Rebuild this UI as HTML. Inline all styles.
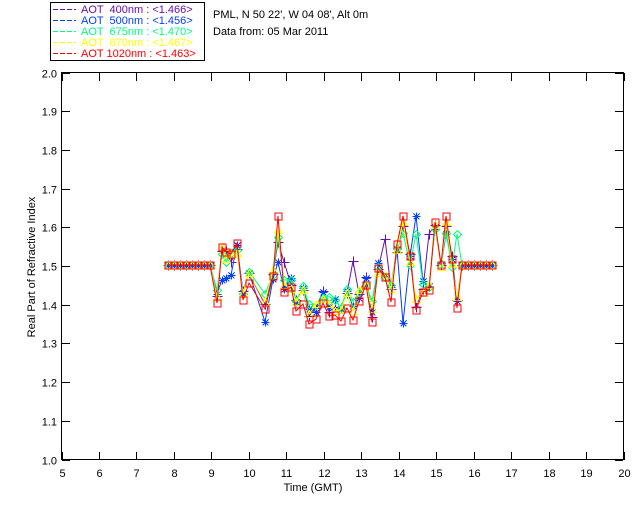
<!DOCTYPE html>
<html><head><meta charset="utf-8"><style>
html,body{margin:0;padding:0;background:#fff;width:640px;height:512px;overflow:hidden}
svg{display:block;font-family:"Liberation Sans",sans-serif;font-size:11px}
</style></head><body>
<svg id="s" width="640" height="512" xmlns="http://www.w3.org/2000/svg" shape-rendering="crispEdges">
<rect x="50.5" y="2.5" width="154" height="58" fill="none" stroke="#000"/>
<g stroke-width="1" stroke-dasharray="5,2">
<line x1="53" y1="9.5" x2="76" y2="9.5" stroke="#6a0dad"/>
<line x1="53" y1="20.5" x2="76" y2="20.5" stroke="#0040ff"/>
<line x1="53" y1="31.5" x2="76" y2="31.5" stroke="#00ff80"/>
<line x1="53" y1="42.5" x2="76" y2="42.5" stroke="#ffff00"/>
<line x1="53" y1="53.5" x2="76" y2="53.5" stroke="#ff0000"/>
</g>
<text x="81" y="13" fill="#6a0dad" xml:space="preserve">AOT  400nm : &lt;1.466&gt;</text>
<text x="81" y="24" fill="#0040ff" xml:space="preserve">AOT  500nm : &lt;1.456&gt;</text>
<text x="81" y="35" fill="#00ff80" xml:space="preserve">AOT  675nm : &lt;1.470&gt;</text>
<text x="81" y="46" fill="#ffff00" xml:space="preserve">AOT  870nm : &lt;1.467&gt;</text>
<text x="81" y="57" fill="#ff0000" xml:space="preserve">AOT 1020nm : &lt;1.463&gt;</text>
<text x="213" y="18" fill="#000">PML, N 50 22', W 04 08', Alt 0m</text>
<text x="213" y="35" fill="#000">Data from: 05 Mar 2011</text>
<rect x="61.5" y="72.5" width="562" height="387" fill="none" stroke="#000"/>
<g id="ax"></g>
<text x="313" y="491" text-anchor="middle">Time (GMT)</text>
<text transform="translate(35,267) rotate(-90)" text-anchor="middle">Real Part of Refractive Index</text>
<g id="d"></g>
</svg>
<script>
var ns="http://www.w3.org/2000/svg",ax=document.getElementById('ax'),d=document.getElementById('d');
function el(t,a,p){var e=document.createElementNS(ns,t);for(var k in a)e.setAttribute(k,a[k]);if(a.txt){e.textContent=a.txt;e.removeAttribute('txt');}(p||ax).appendChild(e);return e;}
for(var i=0;i<=15;i++){var x=Math.round(61.5+i*562/15)+.5;
 el('line',{x1:x,y1:460,x2:x,y2:452,stroke:'#000'});el('line',{x1:x,y1:73,x2:x,y2:81,stroke:'#000'});
 el('text',{x:x,y:477,'text-anchor':'middle',txt:String(5+i)});}
for(var j=0;j<=10;j++){var y=Math.round(459.5-j*38.7)+.5;
 el('line',{x1:62,y1:y,x2:70,y2:y,stroke:'#000'});el('line',{x1:623,y1:y,x2:615,y2:y,stroke:'#000'});
 el('text',{x:57,y:y+4,'text-anchor':'end',txt:(1+j/10).toFixed(1)});}
var X=[],R=[];
for(var a=168;a<=214;a+=6){X.push(a);R.push(265);}
var mid=[[217,303],[222,247],[226,252],[231,254],[237,243],[243,300],[249,283],[265,309],[273,276],[278,216],[284,292],[291,287],[296,311],[303,304],[309,324],[316,319],[323,303],[329,316],[335,315],[341,321],[347,308],[353,320],[359,301],[366,285],[372,322],[378,268],[385,277],[391,302],[397,244],[403,216],[410,256],[416,310],[423,292],[429,290],[435,222],[441,265],[446,216],[452,259],[457,308]];
mid.forEach(function(p){X.push(p[0]);R.push(p[1]);});
for(a=462;a<=496;a+=6){X.push(a);R.push(265);}
var first=8,last=first+mid.length;
function ser(f,j,ov){return R.map(function(y,i){if(i<first||i>=last)return 265;var v=265+(y-265)*f+((i*j)%7-3)*2;if(ov&&ov[X[i]]!=null)v=ov[X[i]];return v;});}
var P=ser(0.8,5,{278:242,284:262,353:261,385:239,429:234,441:265,457:300,217:296}),
B=ser(0.75,3,{403:323,416:216,278:262,265:322,222:280,226:278,231:275}),
G=ser(0.7,2,{457:234,416:234}),Y=ser(0.8,4,{});
function line(arr,c){el('polyline',{points:X.map(function(x,i){return x+','+arr[i]}).join(' '),fill:'none',stroke:c,'stroke-width':1,'shape-rendering':'auto'},d);}
function mk(arr,c,t){X.forEach(function(x,i){var y=Math.round(arr[i])+.5;x+=.5;
 if(t=='p'){el('path',{d:'M'+(x-5)+' '+y+'h10M'+x+' '+(y-5)+'v10',stroke:c,fill:'none'},d);}
 else if(t=='a'){el('path',{d:'M'+(x-4)+' '+y+'h8M'+x+' '+(y-4)+'v8M'+(x-3)+' '+(y-3)+'l6 6M'+(x+3)+' '+(y-3)+'l-6 6',stroke:c,fill:'none'},d);}
 else if(t=='d'){el('path',{d:'M'+x+' '+(y-4)+'l4 4l-4 4l-4-4z',stroke:c,fill:'none'},d);}
 else if(t=='t'){el('path',{d:'M'+x+' '+(y-4)+'l4 7h-8z',stroke:c,fill:'none'},d);}
 else {el('rect',{x:x-3.5,y:y-3.5,width:7,height:7,stroke:c,fill:'none','stroke-width':1},d);}});}
line(P,'#6a0dad');mk(P,'#6a0dad','p');
line(B,'#0040ff');mk(B,'#0040ff','a');
line(G,'#00ff80');mk(G,'#00ff80','d');
line(Y,'#ffff00');mk(Y,'#ffff00','t');
line(R,'#ff0000');mk(R,'#ff0000','s');
</script>
</body></html>
